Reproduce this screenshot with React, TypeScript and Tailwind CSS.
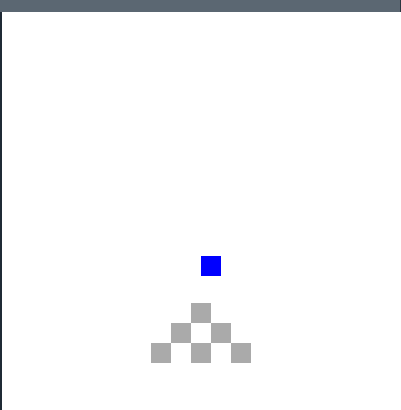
export default function App() {
  // sprite cells on the play field, page coordinates minus the bar
  const blocks = [
    { x: 191, y: 303 },
    { x: 171, y: 323 },
    { x: 211, y: 323 },
    { x: 151, y: 343 },
    { x: 191, y: 343 },
    { x: 231, y: 343 },
  ];

  return (
    <div className="w-[401px] h-[410px] flex flex-col bg-white overflow-hidden">
      <div className="h-[12px] shrink-0 bg-[#5b6772] border-r border-[#2b3640]" />
      <div className="relative flex-1 bg-white border-l-2 border-[#1f2a35]">
        <div className="absolute left-[199px] top-[244px] w-[20px] h-[20px] bg-[#0000ff]" />
        {blocks.map((b, i) => (
          <div
            key={i}
            className="absolute w-[20px] h-[20px] bg-[#aaaaaa]"
            style={{ left: b.x - 2, top: b.y - 12 }}
          />
        ))}
      </div>
    </div>
  );
}
